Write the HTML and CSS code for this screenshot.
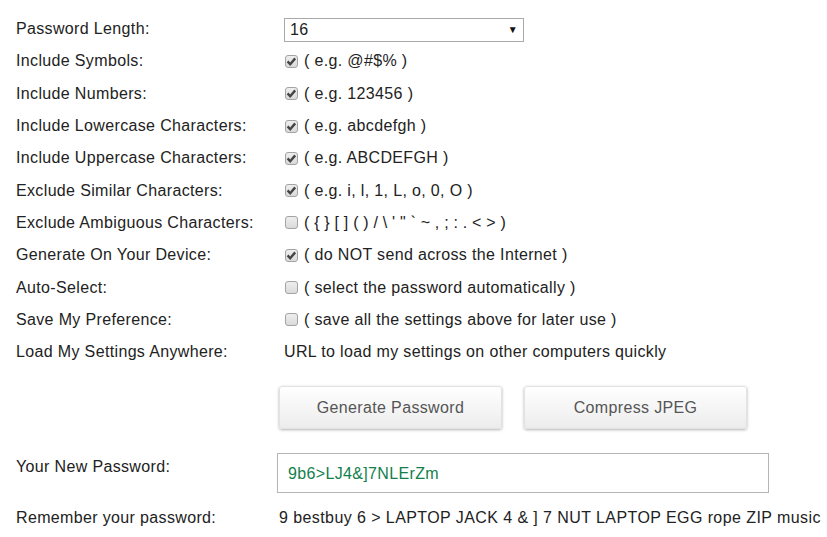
FILE: index.html
```html
<!DOCTYPE html>
<html>
<head>
<meta charset="utf-8">
<link rel="stylesheet" href="styles.css">
</head>
<body>
<div class="page">
  <div class="row first">
    <div class="label">Password Length:</div>
    <div class="value">
      <div class="select"><span>16</span><span class="arrow">&#9660;</span></div>
    </div>
  </div>
  <div class="row">
    <div class="label">Include Symbols:</div>
    <div class="value"><span class="cb on"><svg viewBox="0 0 13 13"><path d="M2.6 6.4 L5.2 9.2 L10.2 3.4" /></svg></span>( e.g. @#$% )</div>
  </div>
  <div class="row">
    <div class="label">Include Numbers:</div>
    <div class="value"><span class="cb on"><svg viewBox="0 0 13 13"><path d="M2.6 6.4 L5.2 9.2 L10.2 3.4" /></svg></span>( e.g. 123456 )</div>
  </div>
  <div class="row">
    <div class="label">Include Lowercase Characters:</div>
    <div class="value"><span class="cb on"><svg viewBox="0 0 13 13"><path d="M2.6 6.4 L5.2 9.2 L10.2 3.4" /></svg></span>( e.g. abcdefgh )</div>
  </div>
  <div class="row">
    <div class="label">Include Uppercase Characters:</div>
    <div class="value"><span class="cb on"><svg viewBox="0 0 13 13"><path d="M2.6 6.4 L5.2 9.2 L10.2 3.4" /></svg></span>( e.g. ABCDEFGH )</div>
  </div>
  <div class="row">
    <div class="label">Exclude Similar Characters:</div>
    <div class="value"><span class="cb on"><svg viewBox="0 0 13 13"><path d="M2.6 6.4 L5.2 9.2 L10.2 3.4" /></svg></span>( e.g. i, l, 1, L, o, 0, O )</div>
  </div>
  <div class="row">
    <div class="label">Exclude Ambiguous Characters:</div>
    <div class="value"><span class="cb"></span><span class="amb">( { } [ ] ( ) / \ ' " ` ~ , ; : . &lt; &gt; )</span></div>
  </div>
  <div class="row">
    <div class="label">Generate On Your Device:</div>
    <div class="value"><span class="cb on"><svg viewBox="0 0 13 13"><path d="M2.6 6.4 L5.2 9.2 L10.2 3.4" /></svg></span>( do NOT send across the Internet )</div>
  </div>
  <div class="row">
    <div class="label">Auto-Select:</div>
    <div class="value"><span class="cb"></span>( select the password automatically )</div>
  </div>
  <div class="row">
    <div class="label">Save My Preference:</div>
    <div class="value"><span class="cb"></span>( save all the settings above for later use )</div>
  </div>
  <div class="row">
    <div class="label">Load My Settings Anywhere:</div>
    <div class="value">URL to load my settings on other computers quickly</div>
  </div>
  <div class="buttons">
    <button class="btn">Generate Password</button>
    <button class="btn">Compress JPEG</button>
  </div>
  <div class="pwrow">
    <div class="label">Your New Password:</div>
    <div class="pwbox">9b6&gt;LJ4&amp;]7NLErZm</div>
  </div>
  <div class="remrow">
    <div class="label">Remember your password:</div>
    <div class="remval">9 bestbuy 6 &gt; LAPTOP JACK 4 &amp; ] 7 NUT LAPTOP EGG rope ZIP music</div>
  </div>
</div>
</body>
</html>
```
FILE: styles.css
```css
html, body {
  margin: 0;
  padding: 0;
  background: #fff;
}
body {
  font-family: "Liberation Sans", Arial, sans-serif;
  font-size: 16px;
  letter-spacing: 0.35px;
  color: #222;
  overflow: hidden;
}
.page {
  padding: 13px 0 0 16px;
}
.row {
  display: flex;
  align-items: center;
  height: 32.3px;
}
.label {
  width: 268px;
  flex: none;
  white-space: nowrap;
}
.value {
  display: flex;
  align-items: center;
  white-space: nowrap;
}
.select {
  box-sizing: border-box;
  width: 240px;
  height: 24px;
  border: 1px solid #a9a9a9;
  display: flex;
  align-items: center;
  justify-content: space-between;
  padding: 0 5px 0 5px;
  margin-top: 1px;
}
.arrow {
  font-size: 10px;
  color: #111;
}
.cb {
  box-sizing: border-box;
  width: 13px;
  height: 13px;
  border: 1px solid #a3a3a3;
  border-radius: 3px;
  background: linear-gradient(#eeeeee, #dadada);
  margin: 0 6px 0 1px;
  display: inline-flex;
  align-items: center;
  justify-content: center;
  flex: none;
}
.cb svg {
  width: 13px;
  height: 13px;
  margin: -1px;
}
.cb svg path {
  fill: none;
  stroke: #454545;
  stroke-width: 2.4;
}
.amb {
  letter-spacing: 0.2px;
  word-spacing: 0;
}
.buttons {
  display: flex;
  gap: 22px;
  margin: 18px 0 0 263px;
}
.btn {
  width: 223px;
  height: 43px;
  font-family: "Liberation Sans", Arial, sans-serif;
  font-size: 16px;
  letter-spacing: 0.35px;
  color: #555;
  background: linear-gradient(#ffffff, #ececec);
  border: 1px solid #e2e2e2;
  border-radius: 3px;
  box-shadow: 0 1px 3px rgba(0, 0, 0, 0.3);
  padding: 0;
}
.pwrow {
  display: flex;
  align-items: flex-start;
  margin-top: 24px;
}
.pwrow .label {
  width: 261px;
  padding-top: 5px;
}
.pwbox {
  box-sizing: border-box;
  width: 492px;
  height: 40px;
  border: 1px solid #b5b5b5;
  color: #13804c;
  display: flex;
  align-items: center;
  padding: 1px 10px 0 10px;
}
.remrow {
  display: flex;
  align-items: center;
  margin-top: 16px;
  white-space: nowrap;
}
.remrow .label {
  width: 263px;
}
.remval {
  letter-spacing: 0.42px;
}
```
